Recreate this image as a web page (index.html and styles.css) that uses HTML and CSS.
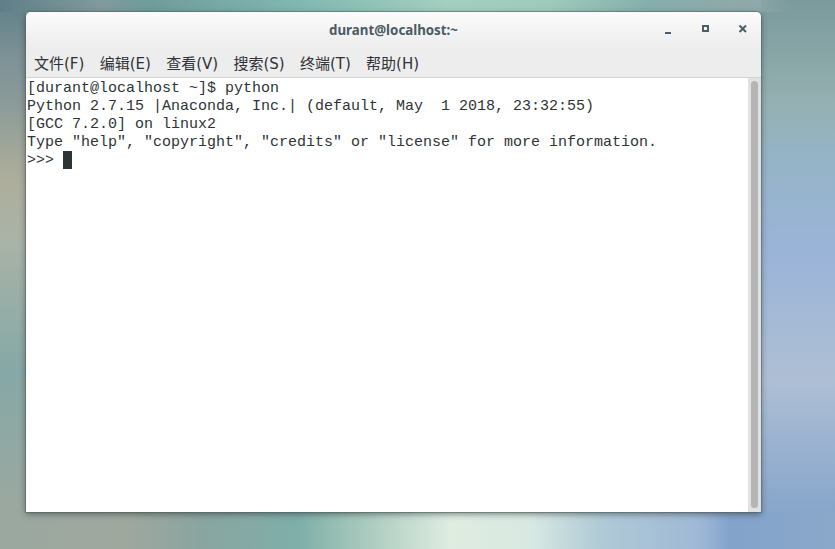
FILE: index.html
```html
<!DOCTYPE html>
<html lang="zh">
<head>
<meta charset="utf-8">
<title>durant@localhost:~</title>
<link rel="stylesheet" href="styles.css">
</head>
<body>
<div class="window">
  <header class="titlebar">
    <div class="title">durant@localhost:~</div>
    <div class="controls">
      <svg class="ctl" viewBox="0 0 16 16" width="16" height="16"><rect x="4" y="10" width="6" height="2" fill="#4f5e66"/></svg>
      <svg class="ctl" viewBox="0 0 16 16" width="16" height="16"><path d="M4 3h7v7H4z M6 5v3h3V5z" fill="#4f5e66" fill-rule="evenodd"/></svg>
      <svg class="ctl" viewBox="0 0 16 16" width="16" height="16"><path d="M4.5 3.500L11 10M11 3.500L4.500 10" stroke="#4f5e66" stroke-width="2" fill="none"/></svg>
    </div>
  </header>
  <nav class="menubar">
    <span class="menu">文件(F)</span>
    <span class="menu">编辑(E)</span>
    <span class="menu">查看(V)</span>
    <span class="menu">搜索(S)</span>
    <span class="menu">终端(T)</span>
    <span class="menu">帮助(H)</span>
  </nav>
  <main class="terminal">
    <pre class="output">[durant@localhost ~]$ python
Python 2.7.15 |Anaconda, Inc.| (default, May  1 2018, 23:32:55)
[GCC 7.2.0] on linux2
Type "help", "copyright", "credits" or "license" for more information.
&gt;&gt;&gt; <span class="cursor"> </span></pre>
    <div class="scrollbar"><div class="thumb"></div></div>
  </main>
</div>
</body>
</html>
```
FILE: styles.css
```css
html, body {
  margin: 0;
  height: 100%;
}
body {
  width: 835px;
  height: 549px;
  overflow: hidden;
  padding: 12px 0 0 26px;
  box-sizing: border-box;
  background-color: #8fa9b0;
  background-repeat: no-repeat;
  background-image:
    linear-gradient(90deg, #5f7f88 0px, #809a9c 100px, #6f9c9c 150px, #80b8b0 300px, #a3cfc0 450px, #9ecabc 550px, #85aeaa 650px, #8fa8a8 750px, rgba(143,168,168,0) 790px),
    linear-gradient(90deg, #9aa89f 0px, #a0a89e 120px, #8aa5a0 200px, #7fafaa 300px, #a0c4b8 350px, #dfece0 450px, #d8e9e2 530px, #b0cad6 600px, #9fb8d6 700px, #83a3cb 730px, #8aa8c9 835px),
    linear-gradient(180deg, #5f8088 0px, #7f9296 60px, #8a9a98 100px, #aeae9c 180px, #aab3a8 240px, #86a8a6 370px, #9aa8a0 500px, #9aa8a0 549px),
    linear-gradient(180deg, #7a9a9c 0px, #95b0b0 100px, #95b4c4 150px, #9ab4d8 250px, #aebfd4 380px, #8aa8cc 500px, #84a0c4 549px);
  background-position: 0 0, 0 512px, 0 0, 761px 0;
  background-size: 835px 12px, 835px 37px, 26px 549px, 74px 549px;
}
.window {
  width: 735px;
  height: 500px;
  display: flex;
  flex-direction: column;
  border-radius: 5px 5px 0 0;
  box-shadow: 0 0 0 1px rgba(90,100,100,.55), 0 2px 6px rgba(30,40,40,.55);
  overflow: hidden;
  background: #fff;
}
.titlebar {
  height: 36px;
  flex: none;
  display: flex;
  align-items: center;
  justify-content: center;
  position: relative;
  background: linear-gradient(180deg, #fbfbfb 0%, #ededed 100%);
}
.title {
  font: 700 13.3px/18px "Noto Sans", sans-serif;
  color: #4b5a63;
}
.controls {
  position: absolute;
  top: 10px;
  right: 10px;
  display: flex;
  gap: 21px;
}
.ctl {
  display: block;
}
.menubar {
  height: 30px;
  flex: none;
  box-sizing: border-box;
  display: flex;
  gap: 15.300px;
  padding: 2px 0 0 8px;
  align-items: center;
  background: #ededed;
  border-bottom: 1px solid #d3d3d1;
  font: 15px/20px "DejaVu Sans", "Noto Sans CJK SC", sans-serif;
  color: #2e3436;
}
.menu {
  display: block;
}
.terminal {
  flex: 1;
  display: flex;
  min-height: 0;
  background: #fff;
}
.output {
  flex: 1;
  margin: 0;
  padding: 2px 0 0 1px;
  font: 15px/18px "Liberation Mono", monospace;
  color: #2e3436;
}
.cursor {
  display: inline-block;
  width: 9px;
  height: 18px;
  margin-top: -1px;
  vertical-align: top;
  background: #2e3436;
}
.scrollbar {
  width: 13px;
  flex: none;
  box-sizing: border-box;
  padding: 3px 3px 4px 3px;
  background: #e1e1e1;
}
.thumb {
  height: 100%;
  border-radius: 4px;
  background: #b5b5b5;
}
```
